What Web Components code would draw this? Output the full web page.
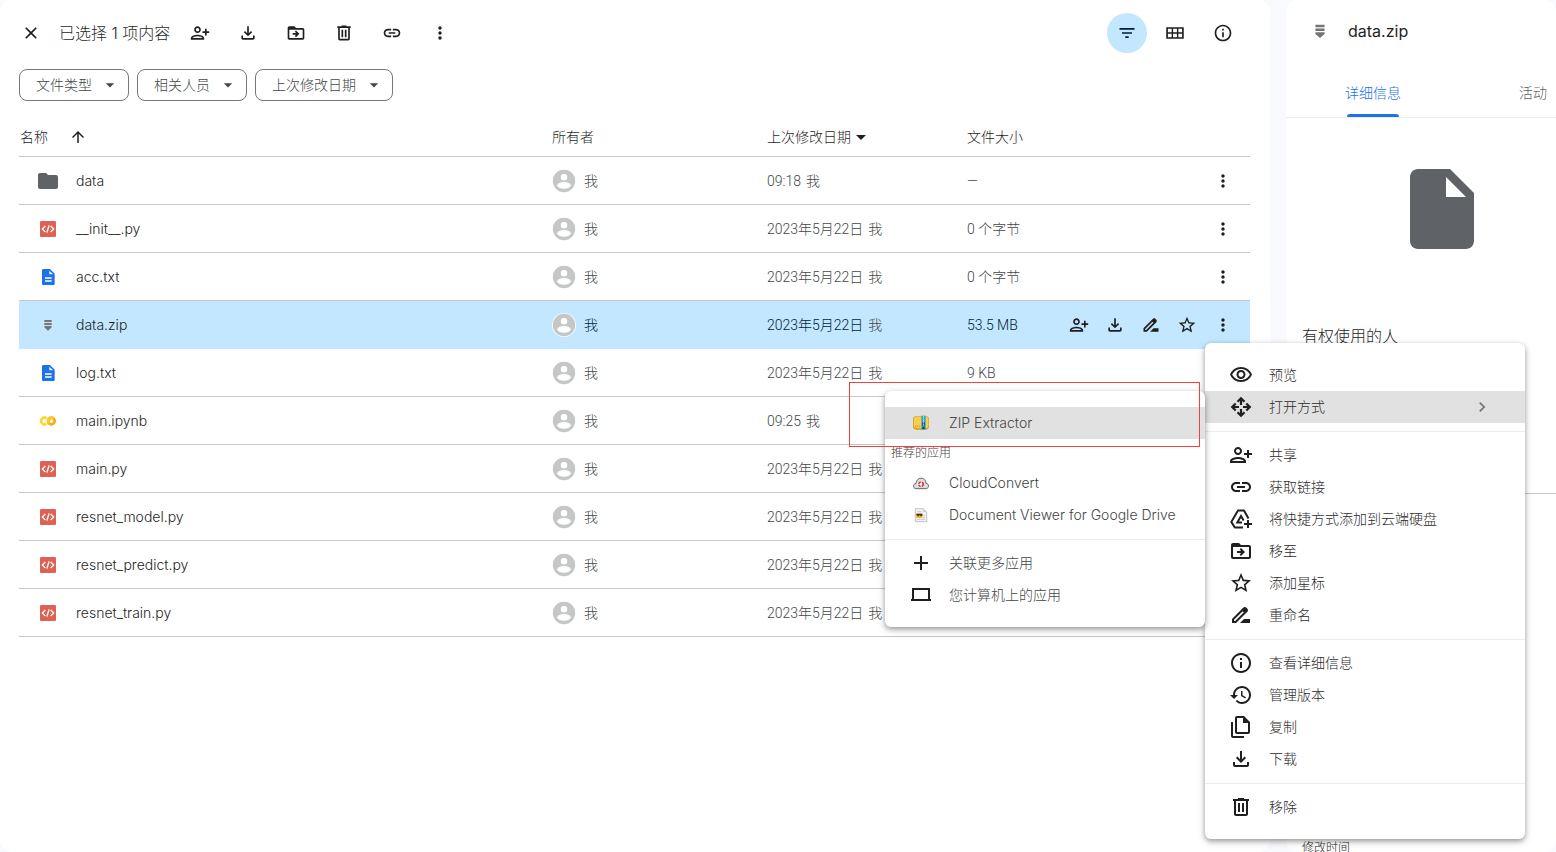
<!DOCTYPE html>
<html lang="zh-CN">
<head>
<meta charset="utf-8">
<title>data.zip - 云端硬盘</title>
<style>
  :root {
    --ink: #1f1f1f;
    --ink-soft: #444746;
    --line: #c7c7c7;
    --select: #c2e7ff;
    --accent: #1a73e8;
    --figures: Roboto, "Noto Sans CJK SC", sans-serif;
  }
  body {
    margin: 0;
    background: #f8fafd;
    color: var(--ink);
    font: 300 14px/20px Inter, "Noto Sans CJK SC", sans-serif;
  }
</style>
</head>
<body>
<drive-app></drive-app>

<script>
const solid = (d) => `<path fill="currentColor" fill-rule="evenodd" d="${d}"/>`;
const ICONS = {
  close: solid('M19 6.41L17.59 5 12 10.59 6.41 5 5 6.41 10.59 12 5 17.59 6.41 19 12 13.41 17.59 19 19 17.59 13.41 12z'),
  share: solid('M13 8c0-2.21-1.79-4-4-4S5 5.79 5 8s1.79 4 4 4 4-1.79 4-4zm-2 0c0 1.1-.9 2-2 2s-2-.9-2-2 .9-2 2-2 2 .9 2 2zM1 18v2h16v-2c0-2.66-5.33-4-8-4s-8 1.34-8 4zm2 0c.2-.71 3.3-2 6-2 2.69 0 5.77 1.28 6 2H3zm17-3v-3h3v-2h-3V7h-2v3h-3v2h3v3h2z'),
  download: solid('M18 15v3H6v-3H4v3c0 1.1.9 2 2 2h12c1.1 0 2-.9 2-2v-3h-2zm-1-4l-1.41-1.41L13 12.17V4h-2v8.17L8.41 9.59 7 11l5 5 5-5z'),
  move: solid('M20 6h-8l-2-2H4c-1.1 0-2 .9-2 2v12c0 1.1.9 2 2 2h16c1.1 0 2-.9 2-2V8c0-1.1-.9-2-2-2zm0 12H4V8h16v10zM12.16 12H8v2h4.16l-1.59 1.59L11.99 17 16 13.01 11.99 9l-1.41 1.41L12.16 12z'),
  trash: solid('M15 4V3H9v1H4v2h1v13c0 1.1.9 2 2 2h10c1.1 0 2-.9 2-2V6h1V4h-5zm2 15H7V6h10v13zM9 8h2v9H9zm4 0h2v9h-2z'),
  link: solid('M17 7h-4v2h4c1.65 0 3 1.35 3 3s-1.35 3-3 3h-4v2h4c2.76 0 5-2.24 5-5s-2.24-5-5-5zm-6 8H7c-1.65 0-3-1.35-3-3s1.35-3 3-3h4V7H7c-2.76 0-5 2.24-5 5s2.24 5 5 5h4v-2zm-3-4h8v2H8z'),
  more: solid('M12 8c1.1 0 2-.9 2-2s-.9-2-2-2-2 .9-2 2 .9 2 2 2zm0 2c-1.1 0-2 .9-2 2s.9 2 2 2 2-.9 2-2-.9-2-2-2zm0 6c-1.1 0-2 .9-2 2s.9 2 2 2 2-.9 2-2-.9-2-2-2z'),
  filter: solid('M10 18h4v-2h-4v2zM3 6v2h18V6H3zm3 7h12v-2H6v2z'),
  grid: solid('M1.500 5h21v14h-21zM3.500 7v4h4.500V7zM9.700 7v4h4.600V7zM16 7v4h4.500V7zM3.500 13v4h4.500v-4zM9.700 13v4h4.600v-4zM16 13v4h4.500v-4z'),
  info: solid('M11 7h2v2h-2zm0 4h2v6h-2zm1-9C6.480 2 2 6.480 2 12s4.480 10 10 10 10-4.480 10-10S17.520 2 12 2zm0 18c-4.410 0-8-3.590-8-8s3.590-8 8-8 8 3.590 8 8-3.590 8-8 8z'),
  eye: solid('M12 6c3.790 0 7.170 2.130 8.820 5.500C19.170 14.870 15.790 17 12 17s-7.170-2.130-8.820-5.500C4.830 8.130 8.210 6 12 6m0-2C7 4 2.730 7.110 1 11.500 2.730 15.890 7 19 12 19s9.270-3.110 11-7.500C21.270 7.110 17 4 12 4zm0 5c1.380 0 2.500 1.120 2.500 2.500S13.380 14 12 14s-2.500-1.120-2.500-2.500S10.620 9 12 9m0-2c-2.480 0-4.500 2.020-4.500 4.500S9.520 16 12 16s4.500-2.020 4.500-4.500S14.480 7 12 7z'),
  openwith: `<g fill="none" stroke="currentColor" stroke-width="2.200">
    <path d="M12 10V4M8.500 6.700 12 3.200l3.500 3.500M12 14v6M8.500 17.300 12 20.800l3.500-3.500M10 12H4M6.700 8.500 3.200 12l3.500 3.500M14 12h6M17.300 8.500 20.800 12l-3.500 3.500"/></g>`,
  drive: `<g fill="none" stroke="currentColor" stroke-width="2">
    <path stroke-linejoin="round" d="M14 20.500H5.800L2.300 14.900 9 3.500h6l4.500 8"/><path d="M13 15.500H8.300L12 9l2.600 4.500"/><path d="M19 13v8M15 17h8"/></g>`,
  star: solid('M22 9.240l-7.190-.62L12 2 9.190 8.630 2 9.240l5.460 4.730L5.820 21 12 17.270 18.180 21l-1.630-7.030L22 9.240zM12 15.400l-3.760 2.270 1-4.280-3.320-2.880 4.380-.38L12 6.100l1.710 4.040 4.380.38-3.320 2.880 1 4.280L12 15.400z'),
  rename: solid('M18.410 5.800L17.200 4.590c-.78-.78-2.050-.78-2.830 0l-2.680 2.680L3 15.960V20h4.040l8.740-8.740 2.630-2.630c.79-.78.79-2.050 0-2.830zM6.210 18H5v-1.210l8.660-8.660 1.210 1.210L6.210 18zM11 20l4-4h6v4H11z'),
  history: solid('M13 3c-4.970 0-9 4.030-9 9H1l4 4 4-4H6c0-3.870 3.130-7 7-7s7 3.130 7 7-3.130 7-7 7c-1.930 0-3.680-.79-4.940-2.060l-1.420 1.420C8.270 19.990 10.510 21 13 21c4.970 0 9-4.030 9-9s-4.030-9-9-9zm-1 5v5l4.280 2.540.72-1.210-3.500-2.080V8H12z'),
  copy: solid('M2 7h2v14h11v2H4c-1.100 0-2-.9-2-2zM8 1h7l6 6v10c0 1.100-.9 2-2 2H8c-1.100 0-2-.9-2-2V3c0-1.100.9-2 2-2zm0 2v14h11V8h-5V3z'),
  plus: solid('M11 5h2v6h6v2h-6v6h-2v-6H5v-2h6z'),
  laptop: solid('M3 5h18v11h1v2H2v-2h1zM5 7v9h14V7z'),
  chevron: solid('M10 6L8.590 7.410 13.170 12l-4.580 4.590L10 18l6-6z'),
  up: solid('M4 12l1.410 1.410L11 7.830V20h2V7.830l5.580 5.590L20 12l-8-8-8 8z'),
  caret: solid('M7 10l5 5 5-5z'),
  folder: solid('M10 4H4c-1.100 0-2 .9-2 2v12c0 1.100.9 2 2 2h16c1.100 0 2-.9 2-2V8c0-1.100-.9-2-2-2h-8l-2-2z'),
  file: solid('M6 2c-1.100 0-2 .9-2 2v16c0 1.100.9 2 2 2h12c1.100 0 2-.9 2-2V8l-6-6zM13 4l5 5h-5z'),
  zip: solid('M6.500 4.500h11v3h-11zM6.500 9h11v3h-11zM6.500 13.500h11v2L12 20.500 6.500 15.500z'),
  code: `<rect width="24" height="24" rx="2" fill="#e06055"/><g fill="none" stroke="#fff" stroke-width="2"><path d="M8 7.500 3.500 12 8 16.500M16 7.500l4.500 4.500-4.500 4.500M13.700 6.500l-3.400 11"/></g>`,
  doc: `<path fill="#1a73e8" d="M5 0h10l7 7v15c0 1.100-.9 2-2 2H5c-1.100 0-2-.9-2-2V2C3 .9 3.900 0 5 0z"/><path fill="#fff" d="M14 2.500V8h5.500zM7.500 12.500h10v2h-10zM7.500 17h10v2h-10z"/>`,
  colab: `<g fill="none" stroke-width="4"><path stroke="#fdd835" d="M10 8.200A5 5 0 1 0 10 15.800"/><circle cx="17" cy="12" r="5" stroke="#f9ab00"/><path stroke="#fdc92b" d="M13.500 15.500A5 5 0 0 1 20.500 8.500"/></g>`,
  person: `<circle cx="12" cy="12" r="12" fill="#fff"/><circle cx="12" cy="12" r="11.200" fill="#c4c7c5"/><circle cx="12" cy="8.200" r="3.300" fill="#fff"/><ellipse cx="12" cy="16.300" rx="6.700" ry="3.400" fill="#fff"/>`,
  zipapp: `<rect x="0" y="2" width="24" height="20" rx="5" fill="#d99a1c"/><rect x="1.200" y="2.500" width="22" height="17.500" rx="4.500" fill="#f8cf4c"/><rect x="12.500" y="1" width="6.500" height="21" fill="#2fa5cf"/><path fill="#11496b" d="M14 11h3.500v5H14zM14 17.500h3.500V21H14z"/><path stroke="#e8fbff" stroke-width="1.500" stroke-dasharray="1.500 1.500" d="M15.700 2v15"/><path stroke="#e3b03a" stroke-width="3" stroke-dasharray="2 1" d="M3 17h8"/>`,
  cloud: `<path fill="#dedede" stroke="#555" stroke-width="1.300" d="M4 20.500c-4.500-1-4.500-7 .5-7.800C5 2.500 19 1.800 19.500 12.300c5 .8 5 7.200.5 8.200z"/><circle cx="12" cy="14" r="3.300" fill="#fff" stroke="#d9363c" stroke-width="2.600" stroke-dasharray="3.500 1.600"/>`,
  viewer: `<path fill="#f2f2f2" stroke="#a9a9a9" d="M3.500 2.500h12l5 5v14.500h-17z"/><path fill="#ccc" d="M15 2.500v5h5z"/><path stroke="#bbb" d="M6 7h7M6 18.500h12M15 13h3M15 16h3"/><rect x="5" y="10" width="9" height="6" fill="#e9a520"/><path fill="#513207" d="M5 10h9v3l-2 1-2-2-2 2-3-2z"/>`
};

const define = (name, html, setup) => {
  const template = document.createElement('template');
  template.innerHTML = html;
  customElements.define(name, class extends HTMLElement {
    constructor() {
      super();
      this.attachShadow({ mode: 'open' }).append(template.content.cloneNode(true));
    }
    connectedCallback() { if (setup) setup(this, this.shadowRoot); }
  });
};

/* Icon: name picks the drawing, size is its edge in pixels */
define('ui-icon', `
  <style>
    :host { display: block; flex: none; width: var(--size, 24px); height: var(--size, 24px); }
    svg { display: block; width: 100%; height: 100%; overflow: visible; }
  </style>
  <svg viewBox="0 0 24 24" aria-hidden="true"></svg>`,
  (host, root) => {
    if (host.hasAttribute('size')) host.style.setProperty('--size', host.getAttribute('size') + 'px');
    root.querySelector('svg').innerHTML = ICONS[host.getAttribute('name')] || '';
  });

define('icon-button', `
  <style>
    :host { display: block; flex: none; }
    button { display: grid; place-items: center; width: 40px; height: 40px; margin: 0; padding: 0;
      border: 0; border-radius: 50%; background: none; color: inherit; }
    :host([compact]) button { width: 28px; height: 28px; }
    :host([pressed]) button { background: var(--select); color: #001d35; }
  </style>
  <button type="button"><ui-icon></ui-icon></button>`,
  (host, root) => {
    const icon = document.createElement('ui-icon');
    icon.setAttribute('name', host.getAttribute('icon'));
    icon.setAttribute('size', host.getAttribute('size') || '20');
    const button = root.querySelector('button');
    button.replaceChildren(icon);
    button.setAttribute('aria-label', host.getAttribute('label'));
  });

define('filter-chip', `
  <style>
    :host { display: block; }
    button { display: flex; align-items: center; gap: 8px; height: 32px; padding: 0 8px 0 16px;
      border: 1px solid #747775; border-radius: 8px; background: #fff; color: var(--ink-soft); font: inherit; }
  </style>
  <button type="button" aria-haspopup="listbox"><slot></slot><ui-icon name="caret" size="20"></ui-icon></button>`);

define('selection-toolbar', `
  <style>
    :host { display: flex; align-items: center; gap: 8px; height: 66px; padding-right: 7px; }
    .close { margin-left: -8px; }
    .count { min-width: 113px; font-size: 16px; line-height: 24px; white-space: nowrap; }
    .spring { flex: 1; }
  </style>
  <icon-button class="close" icon="close" label="清除选择"></icon-button>
  <div class="count">已选择 1 项内容</div>
  <icon-button icon="share" label="共享"></icon-button>
  <icon-button icon="download" label="下载"></icon-button>
  <icon-button icon="move" label="移至"></icon-button>
  <icon-button icon="trash" label="移除"></icon-button>
  <icon-button icon="link" label="获取链接"></icon-button>
  <icon-button icon="more" label="更多操作"></icon-button>
  <div class="spring"></div>
  <icon-button icon="filter" label="过滤条件" pressed></icon-button>
  <icon-button icon="grid" label="网格布局"></icon-button>
  <icon-button icon="info" label="查看详细信息"></icon-button>`);

const FILES = [
  ['folder', 24, 'data', '09:18', '—'],
  ['code', 16, '__init__.py', '2023年5月22日', '0 个字节'],
  ['doc', 16, 'acc.txt', '2023年5月22日', '0 个字节'],
  ['zip', 16, 'data.zip', '2023年5月22日', '53.5 MB', true],
  ['doc', 16, 'log.txt', '2023年5月22日', '9 KB'],
  ['colab', 16, 'main.ipynb', '09:25', ''],
  ['code', 16, 'main.py', '2023年5月22日', ''],
  ['code', 16, 'resnet_model.py', '2023年5月22日', ''],
  ['code', 16, 'resnet_predict.py', '2023年5月22日', ''],
  ['code', 16, 'resnet_train.py', '2023年5月22日', '']
];

define('file-table', `
  <style>
    :host { display: block; }
    table { width: 100%; border-collapse: separate; border-spacing: 0; table-layout: fixed; }
    th, td { box-sizing: border-box; padding: 0; border-bottom: 1px solid var(--line); text-align: left;
      font-weight: inherit; white-space: nowrap; }
    th { height: 40px; }
    td { height: 48px; color: var(--ink-soft); }
    .owner { width: 215px; }
    .date { width: 200px; }
    .size { width: 103px; }
    .actions { width: 180px; }
    .flex { display: flex; align-items: center; }
    th .flex { gap: 21px; padding-left: 1px; }
    th .date-sort { gap: 0; padding: 0; }
    .date-sort ui-icon { margin: -2px; }
    .name .cell { gap: 16px; padding-left: 17px; color: var(--ink); }
    .mark { display: grid; place-items: center; width: 24px; color: #5f6368; }
    .person { gap: 8px; }
    .figure { font-family: var(--figures); }
    .tools { justify-content: flex-end; gap: 8px; padding-right: 13px; color: var(--ink); }
    .selected td { background: var(--select); border-color: var(--select); color: #001d35; }
    .selected .mark { color: #757575; }
    .by { color: var(--ink-soft); margin-left: 5px; }
  </style>
  <table>
    <thead><tr>
      <th scope="col"><div class="flex">名称<ui-icon name="up" size="18"></ui-icon></div></th>
      <th scope="col" class="owner">所有者</th>
      <th scope="col" class="date"><div class="flex date-sort">上次修改日期<ui-icon name="caret" size="24"></ui-icon></div></th>
      <th scope="col" class="size">文件大小</th>
      <th class="actions"></th>
    </tr></thead>
    <tbody></tbody>
  </table>`,
  (host, root) => {
    const tool = (icon, label) => `<icon-button compact icon="${icon}" label="${label}"></icon-button>`;
    root.querySelector('tbody').innerHTML = FILES.map(([icon, px, name, date, size, selected]) => `
      <tr class="${selected ? 'selected' : ''}">
        <td class="name"><div class="flex cell"><span class="mark"><ui-icon name="${icon}" size="${px}"></ui-icon></span>${name}</div></td>
        <td><div class="flex person"><ui-icon name="person" size="24"></ui-icon>我</div></td>
        <td class="figure">${date}<span class="by">我</span></td>
        <td class="figure">${size}</td>
        <td><div class="flex tools">${selected
          ? tool('share', '共享') + tool('download', '下载') + tool('rename', '重命名') + tool('star', '添加星标') : ''}${tool('more', '更多操作')}</div></td>
      </tr>`).join('');
  });

define('menu-panel', `
  <style>
    :host { display: block; box-sizing: border-box; width: 320px; padding: 16px 0; border-radius: 6px; background: #fff;
      box-shadow: 0 2px 5px rgba(0,0,0,.32), 0 3px 10px rgba(0,0,0,.14); }
  </style>
  <div role="menu"><slot></slot></div>`);

define('menu-item', `
  <style>
    :host { display: block; }
    button { display: flex; align-items: center; gap: 16px; width: 100%; height: 32px; margin: 0;
      padding: 0 33px 0 24px; border: 0; background: none; color: inherit; font: inherit; text-align: left; }
    :host([active]) button { background: #e1e1e1; }
    .mark { display: grid; place-items: center; flex: none; width: 24px; color: var(--ink); }
    .text { flex: 1; white-space: nowrap; }
    .more { color: #757575; }
    :host(:not([submenu])) .more { display: none; }
  </style>
  <button type="button" role="menuitem"><span class="mark"></span><span class="text"><slot></slot></span><ui-icon class="more" name="chevron" size="20"></ui-icon></button>`,
  (host, root) => {
    const icon = document.createElement('ui-icon');
    icon.setAttribute('name', host.getAttribute('icon'));
    icon.setAttribute('size', host.getAttribute('size') || '24');
    root.querySelector('.mark').replaceChildren(icon);
  });

define('menu-divider', `
  <style>
    :host { display: block; height: 16px; }
    hr { margin: 0; border: 0; border-bottom: 1px solid #ececec; height: 8px; }
  </style>
  <hr>`);

define('menu-label', `
  <style>
    :host { display: block; padding: 4px 6px 4px; color: var(--ink-soft); font-size: 12px; line-height: 20px; }
  </style>
  <slot></slot>`);

define('context-menu', `
  <style>
    :host { display: block; position: absolute; top: 343px; right: 31px; color: #2b2b2b; }
    .nested { position: absolute; top: 48px; right: 100%; color: var(--ink-soft); }
    .frame { position: absolute; top: -9px; left: -36px; right: 5px; height: 63px; border: 1px solid #f23f3f; pointer-events: none; }
  </style>
  <menu-panel>
    <menu-item icon="eye">预览</menu-item>
    <menu-item icon="openwith" active submenu>打开方式</menu-item>
    <menu-divider></menu-divider>
    <menu-item icon="share">共享</menu-item>
    <menu-item icon="link">获取链接</menu-item>
    <menu-item icon="drive">将快捷方式添加到云端硬盘</menu-item>
    <menu-item icon="move">移至</menu-item>
    <menu-item icon="star">添加星标</menu-item>
    <menu-item icon="rename">重命名</menu-item>
    <menu-divider></menu-divider>
    <menu-item icon="info">查看详细信息</menu-item>
    <menu-item icon="history">管理版本</menu-item>
    <menu-item icon="copy">复制</menu-item>
    <menu-item icon="download">下载</menu-item>
    <menu-divider></menu-divider>
    <menu-item icon="trash">移除</menu-item>
  </menu-panel>
  <div class="nested">
    <menu-panel>
      <menu-item icon="zipapp" size="16" active>ZIP Extractor</menu-item>
      <menu-label>推荐的应用</menu-label>
      <menu-item icon="cloud" size="16">CloudConvert</menu-item>
      <menu-item icon="viewer" size="16">Document Viewer for Google Drive</menu-item>
      <menu-divider></menu-divider>
      <menu-item icon="plus">关联更多应用</menu-item>
      <menu-item icon="laptop">您计算机上的应用</menu-item>
    </menu-panel>
    <div class="frame"></div>
  </div>`);

define('details-panel', `
  <style>
    :host { display: block; overflow: hidden; border-radius: 12px; background: #fff; }
    header { display: flex; align-items: center; gap: 18px; height: 62px; padding-left: 24px; color: #757575; }
    h1, h2 { margin: 0; font-size: 16px; line-height: 24px; font-weight: inherit; color: var(--ink); }
    h1 { font-weight: 400; }
    .tabs { display: flex; box-sizing: border-box; width: 336px; height: 56px; padding-left: 7px; border-bottom: 1px solid #ececec; }
    .tabs button { display: grid; grid-template-rows: 1fr 3px; justify-items: center; align-items: center; width: 160px; padding: 9px 0 0;
      border: 0; background: none; color: #5f6368; font: inherit; }
    .tabs button::after { content: ""; width: 52px; height: 3px; }
    .tabs [aria-selected="true"] { color: var(--accent); }
    .tabs [aria-selected="true"]::after { border-radius: 3px 3px 0 0; background: var(--accent); }
    .preview { display: grid; place-items: center; width: 312px; height: 182px; color: #5f6368; }
    .access { box-sizing: border-box; height: 194px; padding: 24px 16px; border-bottom: 1px solid var(--line); }
    dl { display: flex; flex-direction: column; justify-content: flex-end; height: 362px; margin: 0; padding: 0 16px; }
    dt { font-size: 12px; line-height: 16px; }
  </style>
  <header><ui-icon name="zip" size="20"></ui-icon><h1>data.zip</h1></header>
  <div class="tabs" role="tablist">
    <button type="button" role="tab" aria-selected="true">详细信息</button>
    <button type="button" role="tab" aria-selected="false">活动</button>
  </div>
  <div class="preview"><ui-icon name="file" size="96"></ui-icon></div>
  <section class="access"><h2>有权使用的人</h2></section>
  <dl><dt>修改时间</dt></dl>`);

define('drive-app', `
  <style>
    :host { display: grid; grid-template-columns: minmax(0, 1fr) 270px; gap: 16px; height: 100vh; overflow: hidden; position: relative; }
    main { padding: 0 20px 0 19px; border-radius: 12px; background: #fff; }
    .chips { display: flex; gap: 8px; padding: 3px 0 16px; }
  </style>
  <main>
    <selection-toolbar></selection-toolbar>
    <div class="chips">
      <filter-chip>文件类型</filter-chip>
      <filter-chip>相关人员</filter-chip>
      <filter-chip>上次修改日期</filter-chip>
    </div>
    <file-table></file-table>
  </main>
  <details-panel></details-panel>
  <context-menu></context-menu>`);
</script>
</body>
</html>
